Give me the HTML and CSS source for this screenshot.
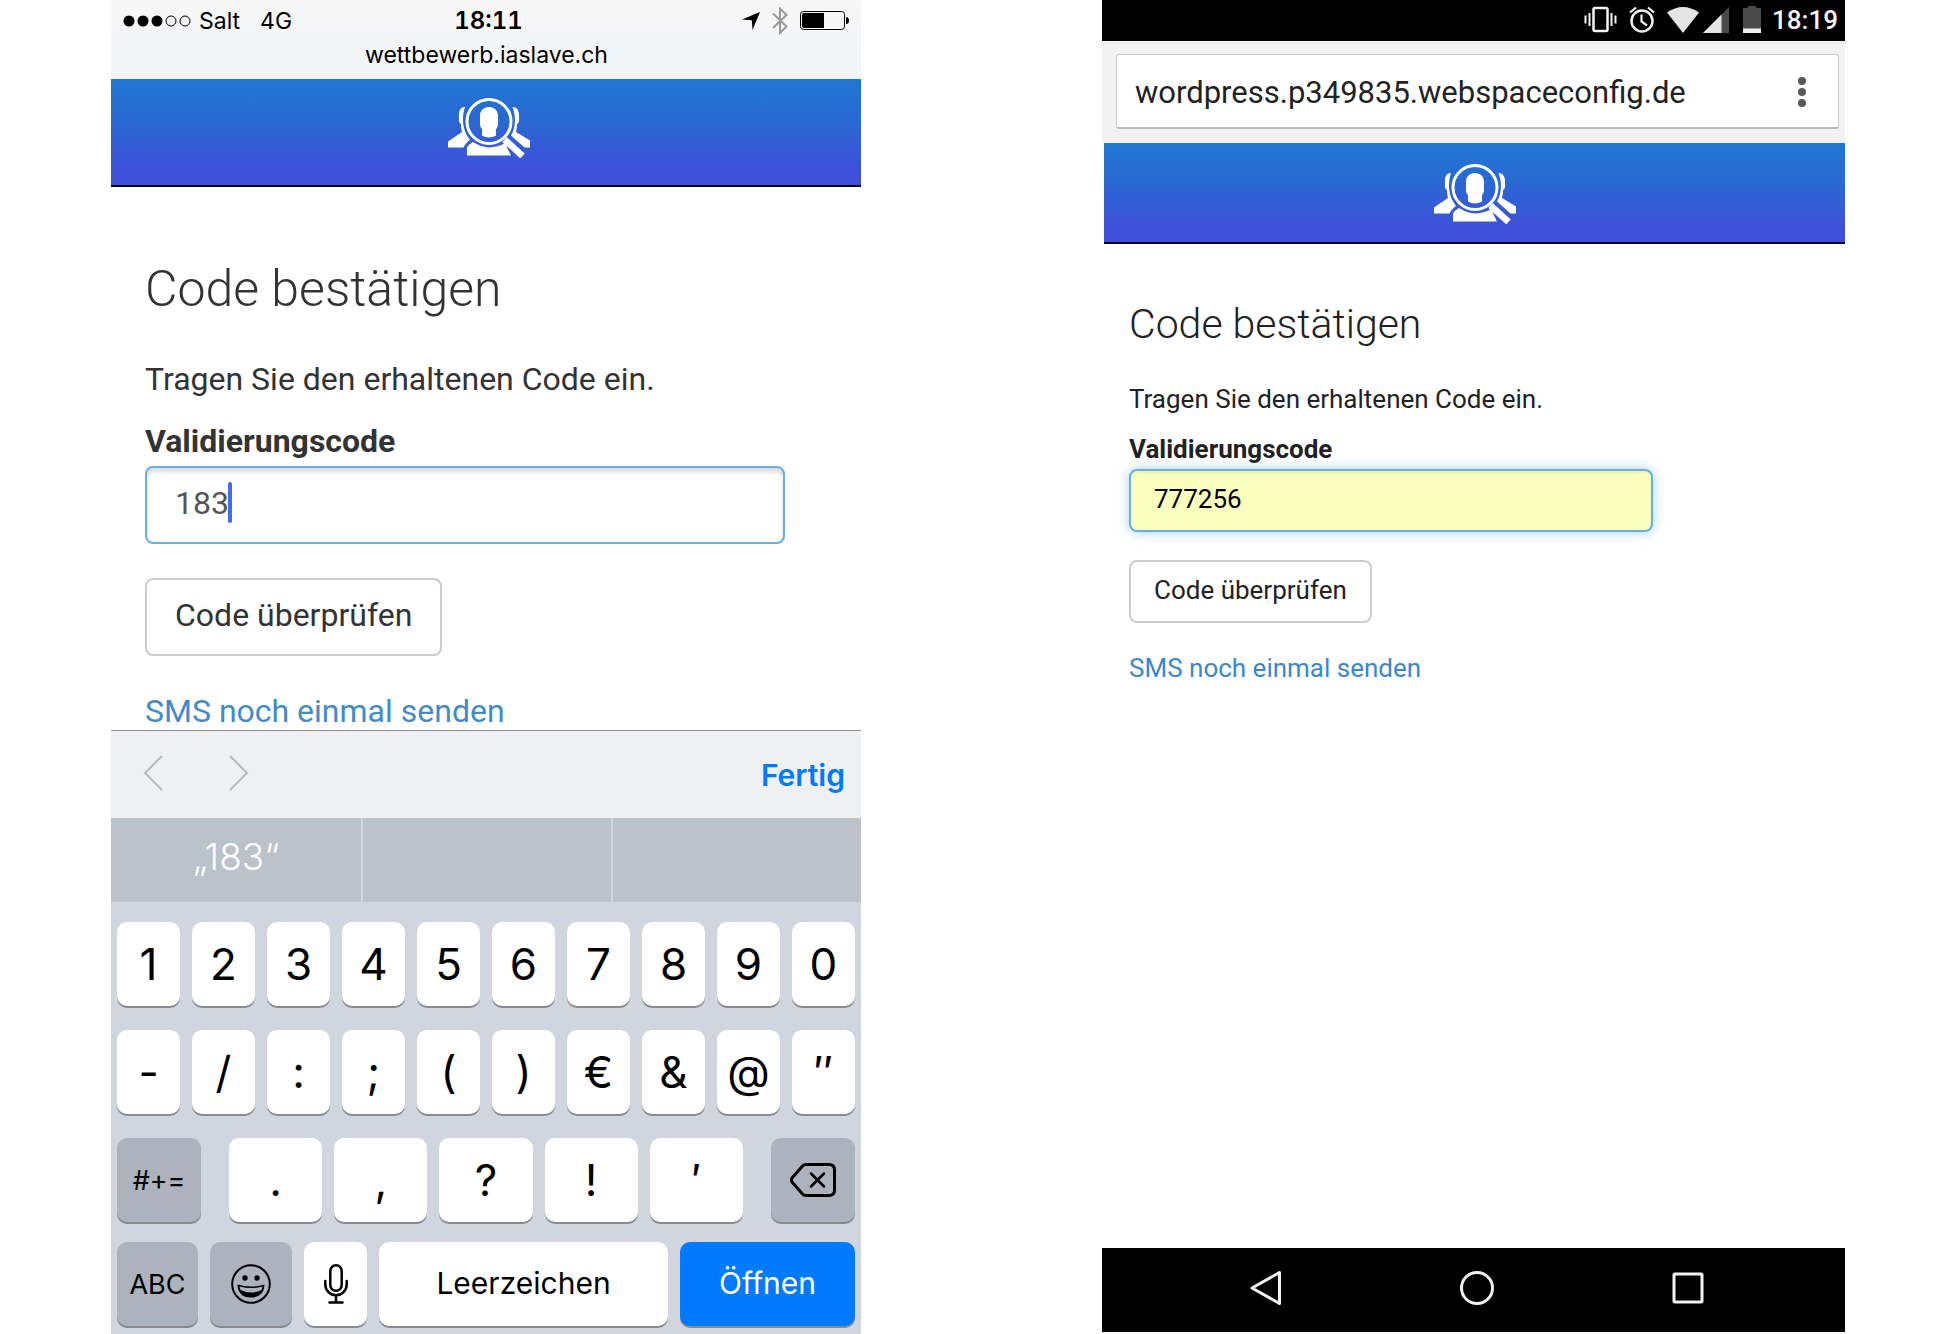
FILE: index.html
```html
<!DOCTYPE html>
<html lang="de">
<head>
<meta charset="utf-8">
<meta name="viewport" content="width=device-width, initial-scale=1">
<title>Code bestätigen</title>
<link rel="stylesheet" href="styles.css">
</head>
<body>
<svg class="defs" width="0" height="0" aria-hidden="true">
  <symbol id="logo" viewBox="0 0 82 60">
    <g fill="#fff">
      <path d="M17 9C12 9 10.500 13 11 20c-.5 2 0 5 2 6 0 3 .5 6 1 8L0 43.500V49.500h15.500c1.500-3 3.500-5.500 6.500-7.500-8-10-8.500-23-5-33z"/>
      <path d="M64.500 9c5 0 7 4 6.500 11 .5 2 0 5-2 6 0 3-.5 5-1 8L82 42.500V49.500h-5.500L63 37.500c5-8.500 5-19 1.500-28.500z"/>
      <path d="M19 57.500v-7c0-2.500 3-4.500 6-6.500 10 7 22 7 32 1l6 12.500z"/>
      <path d="M32 18c0-5.500 3.500-9 9-9s9 3.500 9 9v8c0 2.500-1 4-2 5v6.500c-4 2.500-10 2.500-14 0V31c-1-1-2-2.500-2-5z"/>
    </g>
    <circle cx="41" cy="23.500" r="22" fill="none" stroke="#fff" stroke-width="3"/>
    <path d="M56.500 41.500L74.500 58" stroke="#fff" stroke-width="6.500"/>
  </symbol>
</svg>

<div class="board">
  <section class="phone phone-ios" aria-label="iOS">
    <header class="ios-top">
      <div class="ios-status">
        <div class="ios-carrier">
          <svg width="68" height="12" viewBox="0 0 68 12" aria-hidden="true"><circle cx="6" cy="6" r="5.500"/><circle cx="20" cy="6" r="5.500"/><circle cx="34" cy="6" r="5.500"/><g fill="none" stroke="#000"><circle cx="48" cy="6" r="5"/><circle cx="62" cy="6" r="5"/></g></svg>
          <span>Salt</span><span class="network">4G</span>
        </div>
        <strong class="ios-time">18:11</strong>
        <div class="ios-icons">
          <svg width="18" height="18" viewBox="0 0 18 18" aria-hidden="true"><path d="M18 0L10.500 18L9.800 8.200L0 7.500z"/></svg>
          <svg width="16" height="28" viewBox="0 0 16 28" aria-hidden="true"><path d="M1 6.500L14.500 19.500L8 26V1.500L14.500 8L1 21" fill="none" stroke="#999" stroke-width="2"/></svg>
          <svg width="50" height="20" viewBox="0 0 50 20" aria-hidden="true"><rect x=".5" y=".5" width="44" height="18" rx="3" fill="none" stroke="#000"/><path d="M4 2h20v15H4a2 2 0 0 1-2-2V4a2 2 0 0 1 2-2zM46 6q3 0 3 3.500T46 13z"/></svg>
        </div>
      </div>
      <div class="ios-url">wettbewerb.iaslave.ch</div>
    </header>
    <div class="banner"><svg width="82" height="60" role="img" aria-label="Logo"><use href="#logo"/></svg></div>
    <main class="page">
      <h1>Code bestätigen</h1>
      <p>Tragen Sie den erhaltenen Code ein.</p>
      <label for="code-ios">Validierungscode</label>
      <div class="field"><input id="code-ios" type="text" value="183"><span class="caret"></span></div>
      <button class="submit" type="button">Code überprüfen</button>
      <a href="#resend">SMS noch einmal senden</a>
    </main>
    <div class="keyboard">
      <div class="kb-toolbar">
        <button type="button" aria-label="Zurück"><svg width="20" height="36" viewBox="0 0 20 36"><path d="M19 1L2 18L19 35"/></svg></button>
        <button type="button" aria-label="Weiter"><svg width="20" height="36" viewBox="0 0 20 36"><path d="M1 1L18 18L1 35"/></svg></button>
        <button class="done" type="button">Fertig</button>
      </div>
      <div class="kb-suggest"><button type="button">„183“</button><button type="button" aria-label="Vorschlag 2"></button><button type="button" aria-label="Vorschlag 3"></button></div>
      <div class="keys">
        <div class="row"><button>1</button><button>2</button><button>3</button><button>4</button><button>5</button><button>6</button><button>7</button><button>8</button><button>9</button><button>0</button></div>
        <div class="row"><button>-</button><button>/</button><button>:</button><button>;</button><button>(</button><button>)</button><button>€</button><button>&amp;</button><button>@</button><button>″</button></div>
        <div class="row row-marks">
          <button class="dark small">#+=</button>
          <div class="marks"><button>.</button><button>,</button><button>?</button><button>!</button><button>′</button></div>
          <button class="dark" aria-label="Löschen"><svg width="46" height="34" viewBox="0 0 46 34" fill="none" stroke="#000" stroke-width="3" stroke-linejoin="round" stroke-linecap="round"><path d="M16 1.500H39Q44.500 1.500 44.500 7V27Q44.500 32.500 39 32.500H16Q14 32.500 12.500 31L2 19Q1 17 2 15L12.500 3Q14 1.500 16 1.500z"/><path d="M21 10.500L34 23.500M34 10.500L21 23.500" stroke-width="2.500"/></svg></button>
        </div>
        <div class="row row-space">
          <button class="dark small">ABC</button>
          <button class="dark" aria-label="Emoji"><svg width="40" height="40" viewBox="0 0 40 40"><circle cx="20" cy="20" r="18.800" fill="none" stroke="#000" stroke-width="2"/><circle cx="14" cy="14" r="2.700"/><circle cx="26" cy="14" r="2.700"/><path d="M6.500 20.500Q20 24.500 33.500 20.500Q33 33.500 20 33.500T6.500 20.500z"/><path d="M8.500 22.500Q20 25.500 31.500 22.500L30.500 26Q20 31 9.500 26z" fill="#acb3bd"/></svg></button>
          <button aria-label="Diktat"><svg width="24" height="40" viewBox="0 0 24 40" fill="none" stroke="#000" stroke-width="2.500" stroke-linecap="round"><rect x="6.300" y="1.300" width="11.400" height="25.400" rx="5.700"/><path d="M1.300 17v3.500a10.700 10.700 0 0 0 21.400 0V17M12 32v6M5.500 38.500h13"/></svg></button>
          <button class="word">Leerzeichen</button>
          <button class="word go">Öffnen</button>
        </div>
      </div>
    </div>
  </section>

  <section class="phone phone-android" aria-label="Android">
    <header class="android-status">
      <svg class="vibrate" width="34" height="28" viewBox="0 0 34 28" fill="none" stroke="#f4f4f4" stroke-width="2"><rect x="9.500" y="2" width="14" height="23" rx="1.500" stroke-width="2.500"/><path d="M5.500 7v13M1.500 9.500v8M27.500 7v13M31.500 9.500v8"/></svg>
      <svg class="alarm" width="26" height="28" viewBox="0 0 26 28" fill="none" stroke="#eee" stroke-width="2.500"><circle cx="13" cy="15" r="10.500"/><path d="M12.500 8.500v7l5.500 4M1 6.500L7 1.500M25 6.500L19 1.500" stroke-width="2.200"/></svg>
      <svg class="wifi" width="32" height="26" viewBox="0 0 32 26"><path d="M0 5.500Q16-5.500 32 5.500L16 26z" fill="#e5e5e5"/></svg>
      <svg class="signal" width="26" height="26" viewBox="0 0 26 26"><path d="M26 0V26H0z" fill="#4a4a4a"/><path d="M18.500 7.500V26H0z" fill="#e5e5e5"/></svg>
      <svg class="battery" width="18" height="27" viewBox="0 0 18 27"><path d="M5 0h8v2h5v25H0V2h5z" fill="#4a4a4a"/><path d="M0 22.500h18V27H0z" fill="#eee"/></svg>
      <span>18:19</span>
    </header>
    <div class="android-bar">
      <div class="omnibox">
        <span>wordpress.p349835.webspaceconfig.de</span>
        <button type="button" aria-label="Menü"><svg width="8" height="30" viewBox="0 0 8 30" fill="#595959"><circle cx="4" cy="4" r="4"/><circle cx="4" cy="15" r="4"/><circle cx="4" cy="26" r="4"/></svg></button>
      </div>
    </div>
    <div class="banner"><svg width="82" height="60" role="img" aria-label="Logo"><use href="#logo"/></svg></div>
    <main class="page">
      <h1>Code bestätigen</h1>
      <p>Tragen Sie den erhaltenen Code ein.</p>
      <label for="code-android">Validierungscode</label>
      <div class="field"><input id="code-android" type="text" value="777256"></div>
      <button class="submit" type="button">Code überprüfen</button>
      <a href="#resend">SMS noch einmal senden</a>
    </main>
    <nav class="android-nav">
      <button type="button" aria-label="Zurück"><svg width="36" height="36" viewBox="0 0 36 36"><path d="M31.500 2.500V33.500L4 18z"/></svg></button>
      <button type="button" aria-label="Startseite"><svg width="36" height="36" viewBox="0 0 36 36"><circle cx="18" cy="18" r="15.500"/></svg></button>
      <button type="button" aria-label="Übersicht"><svg width="36" height="36" viewBox="0 0 36 36"><rect x="4" y="4" width="28" height="28" rx="1"/></svg></button>
    </nav>
  </section>
</div>
</body>
</html>
```

FILE: styles.css
```css
* { box-sizing: border-box; }

body {
  margin: 0;
  background: #fff;
  font-family: Roboto, sans-serif;
}

h1, p { margin: 0; }
svg { display: block; }
.defs { position: absolute; }

button {
  margin: 0;
  padding: 0;
  border: 0;
  background: none;
  color: inherit;
  font: inherit;
}

.board {
  display: grid;
  grid-template-columns: 111fr 750fr 241fr 743fr 105fr;
}

.phone {
  display: flex;
  flex-direction: column;
  min-width: 0;
}

.phone-ios { grid-column: 2; }
.phone-android { grid-column: 4; }

/* Shared web page */
.banner {
  display: flex;
  justify-content: center;
  border-bottom: 2px solid #07071c;
  background: linear-gradient(#1f77d1, #2a68d3 40%, #3d52d9 82%, #414edb);
}

.page {
  display: flex;
  flex-direction: column;
  align-items: flex-start;
  color: #333;
}

.page h1 { font-weight: 300; }
.page label { font-weight: 700; }
.page a { color: #428bca; text-decoration: none; }
.field { position: relative; }

.field input {
  display: block;
  width: 100%;
  border: 2px solid #66afe9;
  border-radius: 8px;
  outline: 0;
  font: inherit;
}

.submit {
  border: 2px solid #ccc;
  border-radius: 8px;
  background: #fff;
}

/* iOS */
.phone-ios { font-family: Inter, sans-serif; }

.ios-top {
  height: 79px;
  padding: 6px 11px 0 12px;
  background: linear-gradient(#f7f7f7, #f2f4f7);
  color: #000;
  font-size: 23px;
  line-height: 30px;
}

.ios-status {
  display: grid;
  grid-template-columns: 1fr auto 1fr;
  align-items: center;
}

.ios-carrier { display: flex; align-items: center; gap: 8px; }
.network { margin-left: 12px; }
.ios-time { padding-left: 4px; font-size: 24px; font-weight: 600; font-variant-numeric: tabular-nums; line-height: 30px; }
.ios-icons { display: flex; align-items: center; justify-content: flex-end; gap: 12px; }
.ios-url { padding-top: 4px; text-align: center; }
.phone-ios .banner { padding: 19px 0 27px 6px; }

.phone-ios .page {
  padding: 72px 35px 0 34px;
  font-family: Roboto, sans-serif;
  font-size: 32px;
  line-height: 40px;
}

.phone-ios h1 { margin-bottom: 40px; font-size: 50px; line-height: 60px; }
.phone-ios .page label { margin: 22px 0 5px; }
.phone-ios .field { width: 94%; }

.phone-ios .field input {
  height: 78px;
  padding: 0 28px 4px;
  box-shadow: inset 0 4px 4px rgba(0, 0, 0, .14);
  color: #555;
}

.caret {
  position: absolute;
  top: 16px;
  left: 83px;
  width: 4px;
  height: 41px;
  border-radius: 2px;
  background: #426bf2;
}

.phone-ios .submit { height: 78px; margin: 34px 0 36px; padding: 0 28px 4px; }
.phone-ios .page a { line-height: 38px; }

.keyboard { background: #d1d5dd; color: #000; }

.kb-toolbar {
  display: flex;
  align-items: center;
  gap: 66px;
  height: 88px;
  padding: 0 16px 4px 32px;
  border-top: 1px solid #8e9093;
  background: #eff0f2;
}

.kb-toolbar path { fill: none; stroke: #b8babc; stroke-width: 2; }
.kb-toolbar .done { margin-left: auto; padding-top: 4px; color: #007aff; font-size: 30px; font-weight: 600; }

.kb-suggest {
  display: grid;
  grid-template-columns: repeat(3, 1fr);
  height: 84px;
  background: #bbc2ca;
  color: #fff;
  font-size: 37px;
  font-weight: 300;
}

.kb-suggest button { padding-bottom: 8px; }
.kb-suggest button + button { border-left: 2px solid #d1d5dd; }

.keys {
  display: flex;
  flex-direction: column;
  gap: 24px;
  padding: 20px 6px 8px;
}

.row, .marks { display: grid; grid-auto-flow: column; grid-auto-columns: 1fr; gap: 12px; }
.row-marks { grid-template-columns: 84fr 513fr 84fr; column-gap: 28px; }
.row-space { grid-template-columns: 81fr 82fr 63fr 289fr 175fr; margin-top: -4px; }

.keys button {
  display: flex;
  align-items: center;
  justify-content: center;
  min-width: 0;
  height: 84px;
  border-radius: 10px;
  background: #fff;
  box-shadow: 0 2px 0 #888a8e;
  font-size: 44px;
}

.keys .dark { background: #acb3bd; }
.keys .small { font-size: 27px; }
.keys .word { padding-bottom: 3px; font-size: 30px; }
.keys .go { background: #007aff; color: #fff; }

/* Android */
.android-status {
  display: flex;
  align-items: center;
  justify-content: flex-end;
  height: 41px;
  padding: 0 7px 2px 0;
  background: #000;
  color: #f4f4f4;
  font-size: 26px;
  font-weight: 500;
}

.vibrate { margin-right: 11px; }
.alarm { margin-right: 12px; }
.wifi { margin-right: 4px; }
.signal { margin-right: 14px; }
.battery { margin-right: 11px; }

.android-bar { padding: 13px 6px 14px 14px; background: #f2f2f2; }

.omnibox {
  display: flex;
  align-items: center;
  justify-content: space-between;
  height: 75px;
  padding: 2px 32px 0 18px;
  border: 1px solid #ccc;
  border-bottom: 2px solid #bbb;
  border-radius: 3px;
  background: #fff;
  color: #222;
  font-size: 31px;
}

.phone-android .banner { margin-left: 2px; padding: 21px 0 18px; }

.phone-android .page {
  flex: 1;
  padding: 56px 27px 0;
  color: #222;
  font-size: 26px;
  line-height: 32px;
}

.phone-android h1 { margin-bottom: 35px; font-size: 41px; line-height: 48px; }
.phone-android .page label { margin: 18px 0 4px; }
.phone-android .field { width: 76%; }

.phone-android .field input {
  height: 63px;
  padding: 0 23px 3px;
  background: #faffbd;
  box-shadow: 0 0 12px rgba(102, 175, 233, .6), inset 0 2px 2px rgba(0, 0, 0, .06);
  color: #000;
}

.phone-android .submit { height: 63px; margin: 28px 0 29px; padding: 0 23px 4px; }
.phone-android .page a { color: #3a87cc; }

.android-nav {
  display: grid;
  grid-template-columns: repeat(3, 1fr);
  height: 84px;
  margin-bottom: 2px;
  padding: 0 51px 4px 58px;
  background: #000;
}

.android-nav button { display: flex; align-items: center; justify-content: center; }
.android-nav svg { fill: none; stroke: #f2f2f2; stroke-width: 3; stroke-linejoin: round; }
```
